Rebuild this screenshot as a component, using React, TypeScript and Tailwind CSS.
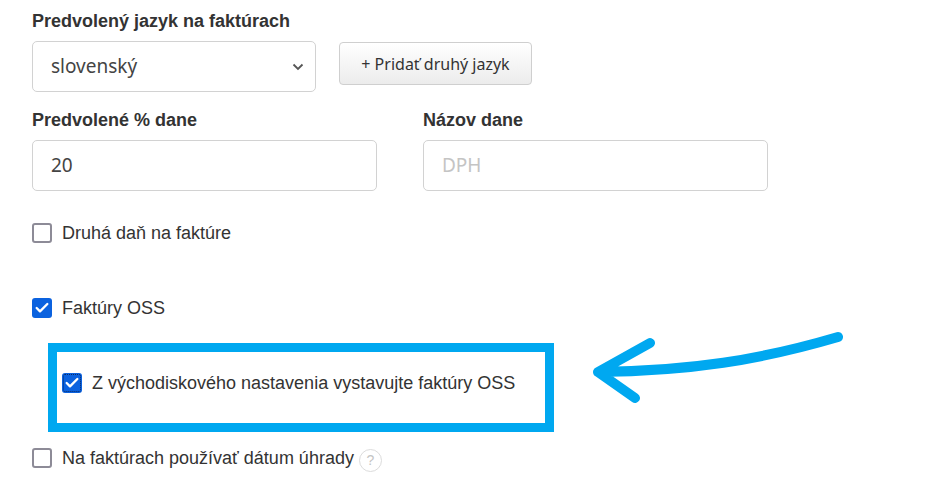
import { Check } from 'lucide-react'

const LABEL = "font-['Liberation_Sans',Arial,sans-serif] text-[18px] font-bold leading-5 text-[#333]"
const TEXT = "font-['Liberation_Sans',Arial,sans-serif] text-[18px] text-[#333]"
const FIELD = "font-['Noto_Sans',sans-serif]"

function Box({ checked, focus }: { checked?: boolean; focus?: boolean }) {
    if (checked) {
        return (
            <span className="relative flex h-5 w-5 shrink-0 items-center justify-center rounded-[3px] bg-[#0b62df]">
                <Check className="h-4 w-4 text-white" strokeWidth={3.5} />
                {focus && <span className="absolute inset-[1px] rounded-[2px] border border-dotted border-[#0a2a66]" />}
            </span>
        )
    }
    return <span className="h-5 w-5 shrink-0 rounded-[3px] border-2 border-[#8d8b97] bg-white" />
}

function Row({ label, checked, focus, children }: { label: string; checked?: boolean; focus?: boolean; children?: React.ReactNode }) {
    return (
        <div className="flex h-6 items-center gap-[10px]">
            <Box checked={checked} focus={focus} />
            <span className={TEXT}>{label}</span>
            {children}
        </div>
    )
}

export default function App() {
    return (
        <div className="relative h-[496px] w-[936px] overflow-hidden bg-white px-8 pt-[11px]">
            <div className={LABEL}>Predvolený jazyk na faktúrach</div>

            <div className="mt-[10px] flex items-start gap-[23px]">
                <div className="flex h-[51px] w-[284px] items-center justify-between rounded-[5px] border border-[#d2d2d2] pl-[18px] pr-[10px]">
                    <span className={`${FIELD} text-[19px] text-[#444]`}>slovenský</span>
                    <svg width="12" height="8" viewBox="0 0 12 8" className="mr-[1px]">
                        <path d="M1.5 1.5 L6 6 L10.5 1.5" fill="none" stroke="#555" strokeWidth="1.8" />
                    </svg>
                </div>
                <button className={`${FIELD} mt-[1px] h-[43px] w-[193px] rounded-[4px] border border-[#cfcfcf] bg-gradient-to-b from-white to-[#ececec] text-[16px] text-[#333]`}>
                    + Pridať druhý jazyk
                </button>
            </div>

            <div className="mt-[18px] flex gap-[46px]">
                <div className="w-[345px]">
                    <div className={LABEL}>Predvolené % dane</div>
                    <div className={`${FIELD} mt-[10px] flex h-[51px] items-center rounded-[5px] border border-[#d2d2d2] pl-[18px] text-[19px] text-[#444]`}>20</div>
                </div>
                <div className="w-[345px]">
                    <div className={LABEL}>Názov dane</div>
                    <div className={`${FIELD} mt-[10px] flex h-[51px] items-center rounded-[5px] border border-[#d2d2d2] pl-[18px] text-[19px] text-[#c4c4c4]`}>DPH</div>
                </div>
            </div>

            <div className="mt-[30px]">
                <Row label="Druhá daň na faktúre" />
            </div>
            <div className="mt-[51px]">
                <Row label="Faktúry OSS" checked />
            </div>

            <div className="ml-[16px] mt-[23px] h-[89px] w-[506px] border-[9px] border-[#00a8f0] pl-[5px] pt-[19px]">
                <Row label="Z východiskového nastavenia vystavujte faktúry OSS" checked focus />
            </div>

            <div className="mt-[14px]">
                <Row label="Na faktúrach používať dátum úhrady">
                    <span className="-ml-[5px] mt-[4px] flex h-[23px] w-[23px] shrink-0 items-center justify-center rounded-full border border-[#dcdcdc] font-['Liberation_Sans',Arial,sans-serif] text-[14px] text-[#c4c4c4]">?</span>
                </Row>
            </div>

            <svg className="pointer-events-none absolute left-0 top-0" width="936" height="496">
                <path
                    d="M838 337 C 760 360, 690 371, 598 372 M650 343 L598 372 L635 398"
                    fill="none"
                    stroke="#00a8f0"
                    strokeWidth="10"
                    strokeLinecap="round"
                    strokeLinejoin="round"
                />
            </svg>
        </div>
    )
}
